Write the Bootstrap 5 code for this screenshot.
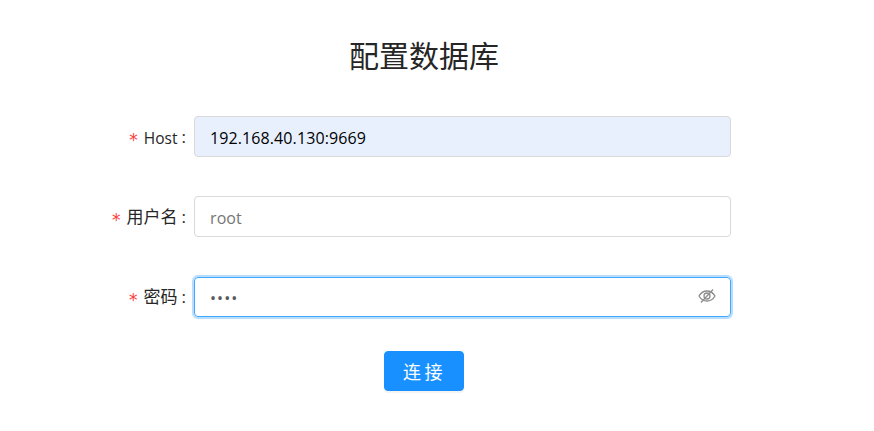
<!DOCTYPE html>
<html lang="zh">
<head>
<meta charset="utf-8">
<title>配置数据库</title>
<link href="https://cdn.jsdelivr.net/npm/bootstrap@5.3.0/dist/css/bootstrap.min.css" rel="stylesheet">
<style>
html,body{height:431px;overflow:hidden;background:#fff}
body{font-family:Roboto,"Noto Sans CJK SC",sans-serif;color:rgba(0,0,0,.85);font-size:16px}
.cfg-wrap{width:848px;padding-top:35px}
.cfg-title{font-size:30px;line-height:38px;font-weight:400;margin:0 0 43px;color:#262626;font-family:"Noto Sans CJK SC",sans-serif}
.cfg-row{height:41px;margin-bottom:39px}
.cfg-label{width:194px;padding-right:8px;line-height:42px;font-size:17px;color:#262626;white-space:nowrap;font-family:"Open Sans","Noto Sans CJK SC",sans-serif}
.cfg-latin{font-size:15.5px;position:relative;top:1px}
.cfg-req{color:#ff3b3e;font-family:"DejaVu Sans",sans-serif;font-size:17px;margin-right:6px;line-height:1;position:relative;top:3px}
.cfg-colon{margin-left:4px}
.cfg-field{width:537px;height:41px;position:relative;flex:none}
.cfg-input.form-control{height:41px;width:100%;border:1px solid #d9d9d9;border-radius:4px;padding:8px 15px 6px;font-size:16px;line-height:25px;letter-spacing:.1px;color:#000;font-family:"Open Sans","Noto Sans CJK SC",sans-serif}
.cfg-input.form-control::placeholder{color:#757575;opacity:1}
.cfg-input.cfg-auto{background:#e8f0fe}
.cfg-focus{height:40px;margin-top:1px;border:1px solid #40a9ff;border-radius:4px;box-shadow:0 0 0 2px rgba(24,144,255,.3)}
.cfg-focus .form-control{border:0;height:38px;padding:7px 44px 5px 15px;box-shadow:none;font-size:16px;color:#595959;letter-spacing:1.1px;font-family:"Open Sans",sans-serif}
.cfg-eye{position:absolute;right:14px;top:9px;width:18px;height:18px;color:#8c8c8c}
.cfg-btn.btn{width:80px;height:40px;padding:1px 0 0 1px;background:#1890ff;border:1px solid #1890ff;color:#fff;font-size:18px;border-radius:4px;letter-spacing:3.5px;box-shadow:0 2px 0 rgba(0,0,0,.045);font-family:"Noto Sans CJK SC",sans-serif}
.cfg-act{margin-top:-5px}
</style>
</head>
<body>
<main class="cfg-wrap">
  <h1 class="cfg-title text-center">配置数据库</h1>
  <form>
    <div class="cfg-row d-flex">
      <label class="cfg-label text-end" for="h"><span class="cfg-req">*</span><span class="cfg-latin">Host</span><span class="cfg-colon">:</span></label>
      <div class="cfg-field"><input id="h" class="form-control cfg-input cfg-auto" value="192.168.40.130:9669"></div>
    </div>
    <div class="cfg-row d-flex">
      <label class="cfg-label text-end" for="u"><span class="cfg-req">*</span>用户名<span class="cfg-colon">:</span></label>
      <div class="cfg-field"><input id="u" class="form-control cfg-input" placeholder="root"></div>
    </div>
    <div class="cfg-row d-flex">
      <label class="cfg-label text-end" for="p"><span class="cfg-req">*</span>密码<span class="cfg-colon">:</span></label>
      <div class="cfg-field cfg-focus">
        <input id="p" type="password" class="form-control" value="root">
        <svg class="cfg-eye" viewBox="0 0 18 18" fill="none" stroke="currentColor" stroke-width="1.3" aria-hidden="true">
          <path d="M1 9c2-3.4 4.700-5 8-5s6 1.600 8 5c-2 3.400-4.700 5-8 5s-6-1.600-8-5z"/>
          <circle cx="9" cy="9" r="3"/>
          <path d="M15 2.500 3 15.500"/>
        </svg>
      </div>
    </div>
    <div class="cfg-act text-center"><button type="button" class="btn cfg-btn">连接</button></div>
  </form>
</main>
<script src="https://cdn.jsdelivr.net/npm/bootstrap@5.3.0/dist/js/bootstrap.bundle.min.js"></script>
</body>
</html>
